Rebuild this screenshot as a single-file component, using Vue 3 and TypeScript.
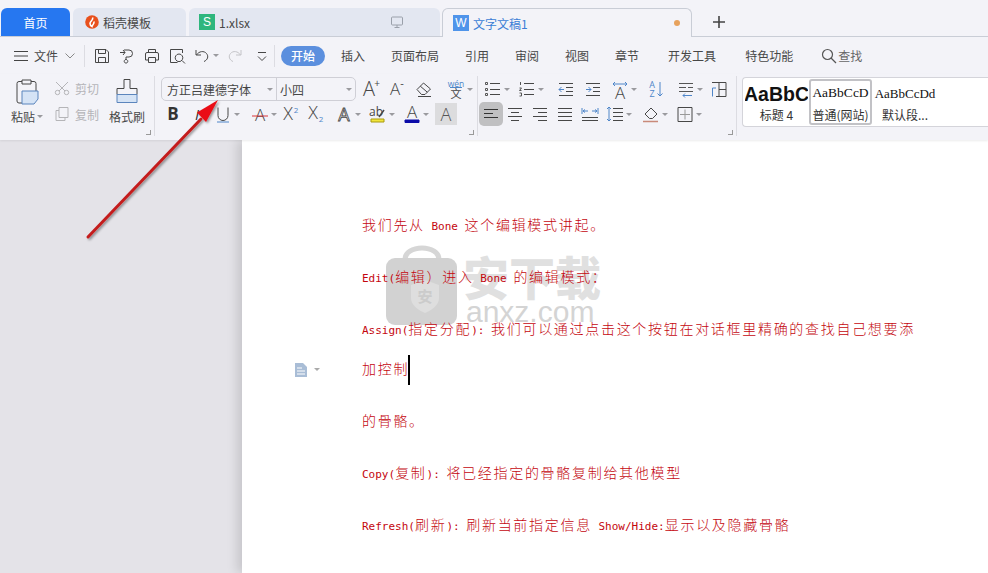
<script setup lang="ts">
interface Part { d?: string; stroke?: string; fill?: string; sw?: number; t?: string; x?: number; y?: number; size?: number; weight?: number; italic?: boolean }
interface Tool { x: number; parts: Part[]; caret?: boolean; active?: boolean; bg?: string }

const L = (d: string, stroke = '#474747', fill = 'none', sw = 1): Part => ({ d, stroke, fill, sw })
const T = (t: string, x: number, y: number, size: number, fill = '#474747', weight = 300, italic = false): Part => ({ t, x, y, size, fill, weight, italic })

function place(start: number, tools: Tool[]) {
  let cur = start
  return tools.map((tool) => {
    const ml = tool.x - 9 - cur
    cur = tool.x + 9 + (tool.caret ? 10 : 0)
    return { ...tool, ml }
  })
}

const BLUE = '#4f86c9'
const quick = place(85, [
  { x: 102, parts: [L('M2.5 2.5h10.5l2.5 2.5v10.5h-13z M5.5 2.5v4h7v-4 M5.5 15.5v-5h7v5')] },
  { x: 126, parts: [L('M7 3h5a3.5 3.5 0 0 1 0 7H9v2.5 M3 5.5h5 M6 3l2 2.5L6 8 M9 12.5a1.8 1.8 0 1 0 .01 0z')] },
  { x: 152, parts: [L('M5.5 5.5v-3h7v3 M5.5 13H2.5V7a1.5 1.5 0 0 1 1.5-1.5h10a1.5 1.5 0 0 1 1.5 1.5v6h-3 M5.5 10.5h7v5h-7z')] },
  { x: 177, parts: [L('M14.5 6V2.5h-12v13h7 M14 13.5l3 3'), L('M11 7a3.8 3.8 0 1 0 .01 0z')] },
  { x: 202, caret: true, parts: [L('M3 3v5h5 M3.5 8C6 4 11 3.5 13.5 6.5s1 6.5-2.5 8')] },
  { x: 235, parts: [L('M15 3v5h-5 M14.5 8C12 4 7 3.5 4.5 6.5s-1 6.5 2.5 8', '#c4c4c8')] },
  { x: 262, parts: [L('M5 5.5h8 M5 9.5l4 4 4-4')] },
])
const menu = ['插入', '页面布局', '引用', '审阅', '视图', '章节', '开发工具', '特色功能']

const fontRow1 = place(356, [
  { x: 370, parts: [T('A', 8, 16, 20), T('+', 16, 7, 10, '#474747', 400)] },
  { x: 396, parts: [T('A', 8, 15, 17), T('-', 15, 7, 11, '#474747', 400)] },
  { x: 424, parts: [L('M2 9.5l6.5-6.5 7 6-5.5 5.5h-3.5z M5.3 6.2l7 6 M3 16.5h13')] },
  { x: 456, caret: true, parts: [T('wén', 9, 6.5, 8.5, BLUE, 400), L('M3 7.5h12', BLUE), T('文', 9, 18, 11, '#474747', 400)] },
])
const fontRow2 = place(161, [
  { x: 173, parts: [T('B', 9, 15, 17, '#333', 700)] },
  { x: 197, parts: [T('I', 9, 15, 15, '#333', 400, true)] },
  { x: 223, caret: true, parts: [L('M4 2.5v8a5 5 0 0 0 10 0v-8'), L('M3 17h12', BLUE)] },
  { x: 260, caret: true, parts: [T('A', 9, 16, 17), L('M1 11h16', '#d9373a')] },
  { x: 290, parts: [T('X', 7, 15, 18), T('2', 15, 8, 8, BLUE, 400)] },
  { x: 315, parts: [T('X', 7, 14, 18), T('2', 15, 17, 8, BLUE, 400)] },
  { x: 344, caret: true, parts: [{ t: 'A', x: 9, y: 15.5, size: 18, fill: 'none', stroke: '#474747', sw: 0.8, weight: 400 }] },
  { x: 378, caret: true, parts: [T('ab', 7, 11, 12, '#474747', 400), L('M2 14h13v3H2z', '#a89a10', '#f2e63c'), L('M10 12l5-7', '#474747', 'none', 1.5)] },
  { x: 412, caret: true, parts: [T('A', 9, 13, 17), L('M2 15h14v2.5H2z', '#0a0aa8', '#0a0aa8')] },
  { x: 446, parts: [T('A', 9, 15.5, 18, '#555')], bg: '#dcdcde' },
])
const lines = (x1: number, x2: number, ys: number[]) => ys.map((y) => `M${x1} ${y}h${x2 - x1}`).join(' ')
const paraRow1 = place(478, [
  { x: 493, caret: true, parts: [L(lines(6, 16, [3.5, 9.5, 14.5])), L('M1.5 2.5h2v2h-2z M1.5 8.5h2v2h-2z M1.5 13.5h2v2h-2z', '#555')] },
  { x: 527, caret: true, parts: [L(lines(6, 16, [3.5, 9.5, 14.5])), L('M2.5 2v3 M1.5 8h2l-2 2.5h2 M1.5 13h2v3h-2', '#555')] },
  { x: 567, parts: [L(lines(1, 15, [3.5, 15.5])), L(lines(8, 15, [7.5, 11.5])), L('M6 9.5H1 M3.5 7L1 9.5 3.5 12', BLUE)] },
  { x: 592, parts: [L(lines(3, 17, [3.5, 15.5])), L(lines(10, 17, [7.5, 11.5])), L('M3 9.5h5 M5.5 7L8 9.5 5.5 12', BLUE)] },
  { x: 620, caret: true, parts: [T('A', 9, 18.5, 17), L('M2 4h14 M4 2L2 4l2 2 M14 2l2 2-2 2', BLUE)] },
  { x: 656, parts: [T('A', 5, 8, 9, BLUE, 400), T('Z', 5, 17, 9, BLUE, 400), L('M13 2v14 M10.5 13.5L13 16l2.5-2.5', BLUE)] },
  { x: 686, caret: true, parts: [L('M2 3.5h14 M2 7.5h7 M11 7.5h5 M2 11.5h14', '#555'), L('M6 15.5h9 M8 13.5l-2 2 2 2', BLUE)] },
  { x: 719, parts: [L('M2 2.5h14v14H6 M9 2.5v14 M9 9.5h7'), L('M2.5 8v8.5 M2.5 8H6', BLUE)] },
])
const paraRow2 = place(484, [
  { x: 497, active: true, parts: [L('M2 4.5h14 M2 8.5h9 M2 12.5h14', '#333')] },
  { x: 521, parts: [L('M2 3.5h14 M5 7.5h8 M2 11.5h14 M5 15.5h8')] },
  { x: 546, parts: [L('M2 3.5h14 M7 7.5h9 M2 11.5h14 M7 15.5h9')] },
  { x: 571, parts: [L('M2 3.5h14 M2 7.5h14 M2 11.5h14 M2 15.5h14')] },
  { x: 596, parts: [L('M1 12.5h16 M1 15.5h16'), L('M1 3v6 M17 3v6 M2 6h5 M11 6h5 M4 4.5L2 6l2 1.5 M14 4.5L16 6l-2 1.5', BLUE)] },
  { x: 621, caret: true, parts: [L('M7 3.5h10 M7 7.5h10 M7 11.5h10 M7 15.5h10'), L('M3 2v14 M1 4l2-2 2 2 M1 14l2 2 2-2', BLUE)] },
  { x: 657, caret: true, parts: [L('M3 9l6-6 6 6-4.5 4.5h-3z'), L('M1 16.5h15', '#c98a7a', 'none', 1.5)] },
  { x: 691, caret: true, parts: [L('M2 2.5h14v14H2z'), L('M9 4.5v10 M4 9.5h10', '#999')] },
])

const paragraphs = [
  '我们先从 Bone 这个编辑模式讲起。',
  'Edit(编辑）进入 Bone 的编辑模式：',
  'Assign(指定分配): 我们可以通过点击这个按钮在对话框里精确的查找自己想要添加控制',
  '的骨骼。',
  'Copy(复制): 将已经指定的骨骼复制给其他模型',
  'Refresh(刷新): 刷新当前指定信息 Show/Hide:显示以及隐藏骨骼',
].map((text) =>
  text.split(/([\x00-\x7f]+)/).filter(Boolean).map((s) => ({ s, latin: /^[\x00-\x7f]/.test(s) }))
)
</script>

<template>
  <div class="app">
    <header class="tabs">
      <div class="tab home">首页</div>
      <div class="tab t2">
        <svg class="logo" width="14" height="14" viewBox="0 0 14 14"><circle cx="7" cy="7" r="6.8" fill="#e8501c" /><path d="M7.5 2.5C9 5 5 6 5 8.5c0 1.5 1 2.5 2 3 .2-1.5 2.5-2.5 2-5" fill="none" stroke="#fff" stroke-width="1.6" /></svg>
        稻壳模板
      </div>
      <div class="tab t3">
        <span class="sq green">S</span>1.xlsx
        <svg class="monitor" width="14" height="14" viewBox="0 0 14 14"><path d="M2.5 2h9a1 1 0 0 1 1 1v6a1 1 0 0 1-1 1h-9a1 1 0 0 1-1-1V3a1 1 0 0 1 1-1z M7 10v2.5 M4.5 12.5h5" fill="none" stroke="#9aa0aa" /></svg>
      </div>
      <div class="tab t4">
        <span class="sq blue">W</span><span class="doc-title">文字文稿1</span>
        <span class="dot"></span>
      </div>
      <div class="plus">
        <svg width="14" height="14" viewBox="0 0 14 14"><path d="M7 1v12M1 7h12" stroke="#444" stroke-width="1.6" /></svg>
      </div>
    </header>

    <nav class="menubar">
      <svg class="burger" width="14" height="12" viewBox="0 0 14 12"><path d="M0 1.5h14M0 6h14M0 10.5h14" stroke="#444" /></svg>
      <span class="file">文件</span>
      <svg class="chev" width="10" height="6" viewBox="0 0 10 6"><path d="M.5.5L5 5 9.5.5" fill="none" stroke="#888" /></svg>
      <span class="sep"></span>
      <template v-for="tool in quick" :key="tool.x">
        <svg class="qicon" :style="{ marginLeft: tool.ml + 'px' }" width="18" height="18" viewBox="0 0 18 18">
          <path v-for="(p, i) in tool.parts" :key="i" :d="p.d" :stroke="p.stroke" :fill="p.fill" :stroke-width="p.sw" />
        </svg>
        <span v-if="tool.caret" class="caret slot"></span>
      </template>
      <span class="sep sep2"></span>
      <span class="pill">开始</span>
      <div class="menu-items">
        <span v-for="m in menu" :key="m">{{ m }}</span>
      </div>
      <span class="search">
        <svg width="16" height="16" viewBox="0 0 16 16"><circle cx="6.5" cy="6.5" r="5" fill="none" stroke="#555" stroke-width="1.2" /><path d="M10 10l5 5" stroke="#555" stroke-width="1.2" /></svg>查找
      </span>
    </nav>

    <section class="ribbon">
      <div class="group clip">
        <div class="paste">
          <svg width="26" height="30" viewBox="0 0 26 30">
            <path d="M3 6.5a2 2 0 0 1 2-2h15a2 2 0 0 1 2 2V14 M3 6.5V24a2 2 0 0 0 2 2h3" fill="none" stroke="#474747" />
            <path d="M8 3h9v4H8z" fill="#f3f3f8" stroke="#474747" />
            <path d="M8 14h16v8l-4 5H8z" fill="#d5e3f5" stroke="#5b85bd" />
          </svg>
          <span class="lab">粘贴<i class="caret"></i></span>
        </div>
        <div class="cutcopy">
          <div class="mini">
            <svg width="16" height="16" viewBox="0 0 16 16"><path d="M2 2l9 9 M14 2l-9 9" stroke="#b5b5b8" fill="none" /><circle cx="3.5" cy="12.5" r="2.2" fill="none" stroke="#b5b5b8" /><circle cx="12.5" cy="12.5" r="2.2" fill="none" stroke="#b5b5b8" /></svg>
            剪切
          </div>
          <div class="mini">
            <svg width="16" height="16" viewBox="0 0 16 16"><path d="M5 1.5h9v10H5z" fill="#f3f3f8" stroke="#b5b5b8" /><path d="M5 4.5H2v10h9v-3" fill="none" stroke="#b5b5b8" /></svg>
            复制
          </div>
        </div>
        <div class="brush">
          <svg width="24" height="30" viewBox="0 0 24 30">
            <path d="M9 2.5h6v9h7v6H2v-6h7z" fill="none" stroke="#474747" />
            <path d="M2 17.5h20v8H2z" fill="#d5e3f5" stroke="#5b85bd" />
          </svg>
          <span class="lab">格式刷</span>
        </div>
        <i class="launcher"></i>
      </div>

      <div class="group font">
        <div class="row">
          <div class="combo">
            <span class="face">方正吕建德字体<i class="caret"></i></span>
            <span class="size">小四<i class="caret"></i></span>
          </div>
          <template v-for="tool in fontRow1" :key="tool.x">
            <svg class="tool" :style="{ marginLeft: tool.ml + 'px' }" width="18" height="18" viewBox="0 0 18 18">
              <template v-for="(p, i) in tool.parts" :key="i">
                <path v-if="p.d" :d="p.d" :stroke="p.stroke" :fill="p.fill" :stroke-width="p.sw" />
                <text v-else :x="p.x" :y="p.y" :font-size="p.size" :fill="p.fill" :font-weight="p.weight" text-anchor="middle">{{ p.t }}</text>
              </template>
            </svg>
            <i v-if="tool.caret" class="caret slot"></i>
          </template>
        </div>
        <div class="row r2">
          <template v-for="tool in fontRow2" :key="tool.x">
            <svg class="tool" :class="{ shaded: tool.bg }" :style="{ marginLeft: tool.ml + 'px' }" width="18" height="18" viewBox="0 0 18 18">
              <template v-for="(p, i) in tool.parts" :key="i">
                <path v-if="p.d" :d="p.d" :stroke="p.stroke" :fill="p.fill" :stroke-width="p.sw" />
                <text v-else :x="p.x" :y="p.y" :font-size="p.size" :fill="p.fill" :stroke="p.stroke" :stroke-width="p.sw" :font-weight="p.weight" :font-style="p.italic ? 'italic' : 'normal'" text-anchor="middle">{{ p.t }}</text>
              </template>
            </svg>
            <i v-if="tool.caret" class="caret slot"></i>
          </template>
        </div>
        <i class="launcher"></i>
      </div>

      <div class="group para">
        <div class="row">
          <template v-for="tool in paraRow1" :key="tool.x">
            <svg class="tool" :style="{ marginLeft: tool.ml + 'px' }" width="18" height="18" viewBox="0 0 18 18">
              <template v-for="(p, i) in tool.parts" :key="i">
                <path v-if="p.d" :d="p.d" :stroke="p.stroke" :fill="p.fill" :stroke-width="p.sw" />
                <text v-else :x="p.x" :y="p.y" :font-size="p.size" :fill="p.fill" :font-weight="p.weight" text-anchor="middle">{{ p.t }}</text>
              </template>
            </svg>
            <i v-if="tool.caret" class="caret slot"></i>
          </template>
        </div>
        <div class="row r2">
          <template v-for="tool in paraRow2" :key="tool.x">
            <svg class="tool" :class="{ pressed: tool.active }" :style="{ marginLeft: tool.ml + 'px' }" width="18" height="18" viewBox="0 0 18 18">
              <path v-for="(p, i) in tool.parts" :key="i" :d="p.d" :stroke="p.stroke" :fill="p.fill" :stroke-width="p.sw" />
            </svg>
            <i v-if="tool.caret" class="caret slot"></i>
          </template>
        </div>
        <i class="launcher"></i>
      </div>

      <div class="styles">
        <div class="style s1"><b>AaBbC</b><span>标题 4</span></div>
        <div class="style s2"><b>AaBbCcD</b><span>普通(网站)</span></div>
        <div class="style s3"><b>AaBbCcDd</b><span>默认段...</span></div>
      </div>
    </section>

    <main class="workspace">
      <article class="page">
        <div class="mark" aria-hidden="true">
          <svg width="72" height="81" viewBox="0 0 72 81">
            <path d="M19 18V14a17 11 0 0 1 34 0v4" fill="none" stroke="#d6d6d6" stroke-width="5" />
            <rect x="0" y="13" width="71" height="67" rx="9" fill="#d2d2d2" />
            <path d="M39 35l14 5v13c0 7-7 12-14 15-7-3-14-8-14-15V40z" fill="#dedede" />
            <text x="39" y="57" text-anchor="middle" font-size="15" font-weight="700" fill="#cbcbcb">安</text>
          </svg>
          <div class="mark-text"><strong>安下载</strong><em>anxz.com</em></div>
        </div>
        <svg class="note" width="28" height="16" viewBox="0 0 28 16">
          <path d="M1 1h8l4 4v10H1z" fill="#a9bdd6" /><path d="M3 6h5M3 9h8M3 12h8" stroke="#fff" />
          <path d="M20 6h6l-3 3z" fill="#aaa" />
        </svg>
        <div class="text">
          <p v-for="(para, i) in paragraphs" :key="i">
            <span v-for="(seg, j) in para" :key="j" :class="seg.latin ? 'latin' : 'han'">{{ seg.s }}</span><i v-if="i === 2" class="cursor"></i>
          </p>
        </div>
      </article>
    </main>

    <svg class="arrow" width="150" height="150" viewBox="0 0 150 150">
      <defs>
        <filter id="sh" x="-20%" y="-20%" width="140%" height="140%"><feDropShadow dx="1.5" dy="1.5" stdDeviation="1.2" flood-color="#000" flood-opacity=".4" /></filter>
      </defs>
      <g filter="url(#sh)">
        <path d="M9 137L122 19" stroke="#c41d1f" stroke-width="3" stroke-linecap="round" />
        <path d="M139 0L118 12.5L127 22z" fill="#ea1015" />
      </g>
    </svg>
  </div>
</template>

<style scoped>
.app {
  position: relative;
  width: 988px;
  height: 573px;
  overflow: hidden;
  display: flex;
  flex-direction: column;
  background: #f3f3f8;
  font-family: "Noto Sans CJK SC", "Liberation Sans", sans-serif;
  font-size: 12px;
  color: #474747;
}
i { font-style: normal; }
.tabs {
  height: 37px;
  box-sizing: border-box;
  padding: 8px 0 0 1px;
  display: flex;
  gap: 3px;
  border-bottom: 1px solid #c9cdd6;
  flex: none;
}
.tab {
  height: 28px;
  border-radius: 6px 6px 0 0;
  background: #e3e7f1;
  display: flex;
  align-items: center;
  box-sizing: border-box;
  flex: none;
}
.home { width: 69px; background: #2677f0; color: #fff; justify-content: center; }
.t2 { width: 113px; padding-left: 12px; gap: 4px; }
.t3 { width: 251px; padding-left: 10px; position: relative; }
.t4 {
  width: 250px;
  height: 29px;
  margin-left: -1px;
  padding-left: 10px;
  background: #f3f3f8;
  border: 1px solid #c9cdd6;
  border-bottom: none;
  position: relative;
}
.sq {
  width: 16px; height: 16px; color: #fff;
  display: flex; align-items: center; justify-content: center;
  font-size: 12px; font-family: "Liberation Sans", sans-serif;
  margin-right: 4px;
}
.green { background: #2eb67d; }
.blue { background: #4f94ea; }
.monitor { margin-left: auto; margin-right: 36px; }
.doc-title { color: #3b7ed6; }
.dot { width: 6px; height: 6px; border-radius: 50%; background: #e7a25d; margin-left: auto; margin-right: 11px; }
.plus { margin-left: 17px; align-self: center; display: flex; }
.menubar {
  height: 37px;
  flex: none;
  display: flex;
  align-items: center;
  padding-left: 14px;
  box-sizing: border-box;
  font-size: 12px;
}
.file { margin-left: 6px; }
.chev { margin-left: 7px; }
.sep { width: 1px; height: 22px; background: #dcdce2; margin-left: 9px; flex: none; }
.sep2 { margin-left: 3px; }
.qicon { flex: none; }
.caret {
  display: inline-block;
  flex: none;
  width: 0;
  height: 0;
  border-left: 3px solid transparent;
  border-right: 3px solid transparent;
  border-top: 3px solid #9a9a9e;
}
.slot { margin: 0 2px; }
.pill {
  margin-left: 6px;
  width: 44px;
  height: 20px;
  border-radius: 10px;
  background: #5b8fde;
  color: #fff;
  display: flex;
  align-items: center;
  justify-content: center;
  font-weight: 500;
}
.menu-items { display: flex; gap: 26px; margin-left: 16px; }
.menu-items span:nth-last-child(-n + 2) { margin-left: 3px; }
.search { margin-left: 28px; display: flex; align-items: center; gap: 1px; color: #666; }
.ribbon {
  height: 66px;
  flex: none;
  display: flex;
  box-shadow: 0 1px 2px rgba(0, 0, 0, .08);
  position: relative;
  z-index: 1;
  background: #f3f3f8;
}
.group { position: relative; box-sizing: border-box; border-right: 1px solid #dcdce2; height: 60px; margin-top: 2px; }
.launcher {
  position: absolute; right: 3px; bottom: 1px; width: 4px; height: 4px;
  border-right: 1px solid #999; border-bottom: 1px solid #999;
}
.clip { width: 155px; display: flex; }
.paste { width: 54px; display: flex; flex-direction: column; align-items: center; padding-top: 1px; gap: 1px; }
.lab { display: flex; align-items: center; gap: 2px; white-space: nowrap; }
.cutcopy { width: 55px; color: #b5b5b8; padding-top: 3px; display: flex; flex-direction: column; gap: 8px; }
.mini { display: flex; align-items: center; gap: 5px; height: 18px; }
.brush { display: flex; flex-direction: column; align-items: center; padding-top: 1px; gap: 1px; width: 36px; }
.font { width: 323px; padding-left: 6px; }
.para { width: 259px; }
.row { display: flex; align-items: center; height: 26px; }
.r2 { margin-top: -1px; }
.combo {
  width: 195px;
  height: 24px;
  box-sizing: border-box;
  border: 1px solid #cfcfd6;
  border-radius: 5px;
  display: flex;
  flex: none;
  align-items: center;
}
.face { width: 115px; padding: 0 3px 0 5px; box-sizing: border-box; display: flex; align-items: center; justify-content: space-between; border-right: 1px solid #cfcfd6; height: 100%; color: #444; white-space: nowrap; }
.size { flex: 1; padding: 0 3px; display: flex; align-items: center; justify-content: space-between; }
.tool { flex: none; overflow: visible; font-family: "Open Sans", "Liberation Sans", "Noto Sans CJK SC", sans-serif; }
.shaded { background: #dcdcde; box-shadow: 0 0 0 2px #dcdcde; }
.pressed { background: #c0c0c2; box-shadow: 0 0 0 3px #c0c0c2; border-radius: 2px; }
.styles {
  flex: 1;
  margin: 3px 0 0 5px;
  height: 50px;
  box-sizing: border-box;
  border: 1px solid #d4d4da;
  border-right: none;
  border-radius: 4px 0 0 4px;
  background: #fff;
  display: flex;
  padding: 1px 0 1px 2px;
  gap: 1px;
}
.style { width: 63px; box-sizing: border-box; display: flex; flex-direction: column; align-items: center; overflow: hidden; white-space: nowrap; }
.style b { height: 28px; color: #111; font-weight: 400; }
.style span { color: #333; line-height: 16px; }
.s1 b { font: 700 19.5px/30px "Liberation Sans", sans-serif; }
.s2 { border: 2px solid #c2c2c6; border-radius: 3px; height: 46px; }
.s2 b { font: 13.5px/24px "Liberation Serif", serif; height: 26px; }
.s3 { width: 64px; }
.s3 b { font: 13px/30px "Liberation Serif", serif; }
.workspace { flex: 1; min-height: 0; background: #e4e3e8; padding-left: 242px; display: flex; }
.page {
  position: relative;
  flex: 1;
  background: #fff;
  box-shadow: -5px 0 10px rgba(0, 0, 0, .13);
}
.text { position: relative; padding: 64px 0 0 120px; width: 566px; }
.text p { margin: 0 0 12px; font-size: 14px; line-height: 40px; color: #c4060e; }
.han { font-size: 14px; line-height: 1; letter-spacing: 1.7px; font-weight: 300; }
.latin { font: 11px/1 "DejaVu Sans Mono", monospace; }
.cursor { display: inline-block; width: 2px; height: 30px; background: #000; vertical-align: middle; margin-left: -1px; }
.note { position: absolute; left: 52px; top: 222px; }
.mark { position: absolute; left: 144px; top: 105px; display: flex; gap: 5px; }
.mark-text { display: flex; flex-direction: column; color: #e0e0e0; padding-top: 5px; }
.mark-text strong { font-size: 46px; line-height: 50px; font-weight: 900; width: 140px; white-space: nowrap; }
.mark-text em { font: 400 30px/24px "Liberation Sans", sans-serif; color: #d4d4d4; margin-left: 3px; }
.arrow { position: absolute; left: 79px; top: 100px; pointer-events: none; z-index: 3; }
</style>
